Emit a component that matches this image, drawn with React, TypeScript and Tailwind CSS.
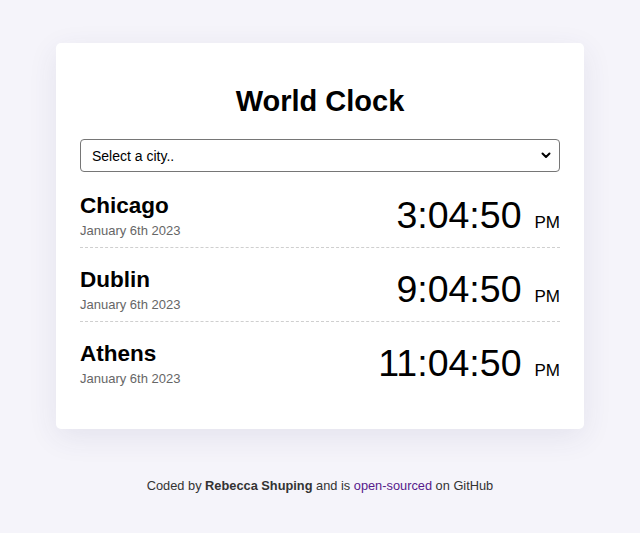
const cities = [
  { name: 'Chicago', date: 'January 6th 2023', time: '3:04:50', period: 'PM' },
  { name: 'Dublin', date: 'January 6th 2023', time: '9:04:50', period: 'PM' },
  { name: 'Athens', date: 'January 6th 2023', time: '11:04:50', period: 'PM' },
]

export default function App() {
  return (
    <div className="min-h-[533px] bg-[#f5f4fa] pt-[43px] font-['Liberation_Sans',Arial,sans-serif] text-black">
      <div className="mx-auto w-[528px] rounded-[5px] bg-white px-6 pt-[42px] pb-[34px] shadow-[0_8px_30px_rgba(60,50,110,0.09)]">
        <h1 className="text-center text-[29px] font-bold leading-[33px]">World Clock</h1>

        <div className="relative mt-[21px] mb-[2px]">
          <select
            className="h-[33px] w-full appearance-none rounded-[4px] border border-[#767676] bg-white pt-[1px] pl-[11px] text-[14px] text-black outline-none"
            defaultValue=""
          >
            <option value="">Select a city..</option>
            <option value="tokyo">Tokyo</option>
            <option value="sydney">Sydney</option>
          </select>
          <svg
            className="pointer-events-none absolute right-[9px] top-[13px]"
            width="10"
            height="7"
            viewBox="0 0 10 7"
            fill="none"
          >
            <path d="M1.5 1.5 5 5l3.5-3.5" stroke="#000" strokeWidth="2" strokeLinecap="round" strokeLinejoin="round" />
          </svg>
        </div>

        {cities.map((city, i) => (
          <div
            key={city.name}
            className={
              i < cities.length - 1
                ? 'flex items-center justify-between border-b border-dashed border-[#cfcfcf] pt-[19px] pb-[9px]'
                : 'flex items-center justify-between pt-[19px] pb-[9px]'
            }
          >
            <div>
              <div className="text-[22.5px] font-bold leading-[25px]">{city.name}</div>
              <div className="mt-[5px] text-[13px] leading-[15px] text-[#666]">{city.date}</div>
            </div>
            <div className="flex items-baseline">
              <span className="text-[37.5px] leading-[41px]">{city.time}</span>
              <span className="ml-[13px] text-[17px]">{city.period}</span>
            </div>
          </div>
        ))}
      </div>

      <footer className="mt-[49px] text-center text-[12.8px] leading-[15px] text-[#333]">
        Coded by <strong>Rebecca Shuping</strong> and is{' '}
        <a href="#" className="text-[#551a8b]">
          open-sourced
        </a>{' '}
        on GitHub
      </footer>
    </div>
  )
}
